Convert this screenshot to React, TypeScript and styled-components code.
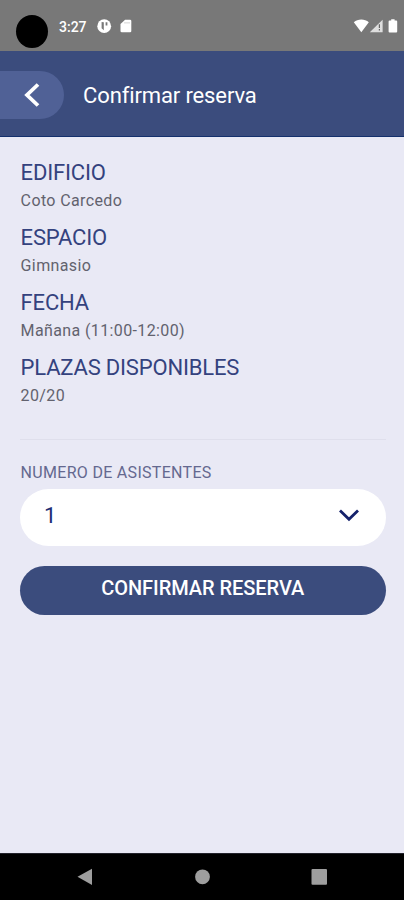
import React from "react";
import styled, { createGlobalStyle } from "styled-components";

const GlobalStyle = createGlobalStyle`
  * { box-sizing: border-box; }
  body { margin: 0; background: #e9e9f5; font-family: Roboto, sans-serif; }
  button { font-family: inherit; border: 0; padding: 0; }
`;

const Screen = styled.div`
  display: flex;
  flex-direction: column;
  width: 404px;
  height: 900px;
  overflow: hidden;
  background: #e9e9f5;
`;

const StatusBar = styled.div`
  display: flex;
  flex: 0 0 51px;
  align-items: flex-start;
  background: #787878;
  color: #fff;
`;

const Camera = styled.div`
  width: 32px;
  height: 33px;
  margin: 15px 0 0 16px;
  border-radius: 50%;
  background: #000;
`;

const Clock = styled.span`
  width: 38px;
  margin: 17px 0 0 11px;
  font-size: 14px;
  font-weight: 500;
  line-height: 20px;
`;

const StatusIcons = styled.svg<{ $end?: boolean }>`
  display: block;
  margin-top: 18px;
  margin-left: ${(p) => (p.$end ? "auto" : "0")};
`;

const Header = styled.header`
  display: flex;
  flex: 0 0 86px;
  align-items: center;
  background: #3b4c7d;
  border-bottom: 1px solid #14306d;
`;

const BackButton = styled.button`
  display: flex;
  align-items: center;
  width: 64px;
  height: 48px;
  margin-top: 2px;
  padding-left: 24px;
  border-radius: 0 24px 24px 0;
  background: #506196;
`;

const Title = styled.h1`
  margin: 5px 0 0 19px;
  color: #fff;
  font-size: 22px;
  font-weight: 400;
  line-height: 28px;
  letter-spacing: -0.12px;
`;

const Content = styled.main`
  display: flex;
  flex: 1;
  flex-direction: column;
  padding: 21px 18.5px 0 20px;
`;

const Details = styled.dl`
  margin: 0;
  padding-bottom: 20.6px;
  border-bottom: 1px solid #dfdfec;
`;

const Detail = styled.div`
  height: 65.1px;
  padding-left: 0.6px;
`;

const Term = styled.dt`
  color: #34427e;
  font-size: 22px;
  line-height: 30px;
  letter-spacing: -0.18px;
`;

const Value = styled.dd`
  margin: 3px 0 0;
  color: #62626e;
  font-size: 16px;
  line-height: 19px;
  letter-spacing: 0.38px;
`;

const FieldLabel = styled.label`
  margin: 23px 0 6px 0.6px;
  color: #64688f;
  font-size: 16px;
  line-height: 20px;
  letter-spacing: 0.3px;
`;

const Select = styled.button`
  display: flex;
  flex: 0 0 57px;
  align-items: center;
  justify-content: space-between;
  padding: 0 26px 4px 24px;
  border-radius: 29px;
  background: #fff;
  color: #1d2d74;
  font-size: 22px;
`;

const Confirm = styled.button`
  flex: 0 0 49px;
  margin-top: 20px;
  padding-bottom: 4px;
  border-radius: 25px;
  background: #3b4c7d;
  color: #fff;
  font-size: 20px;
  font-weight: 500;
  letter-spacing: -0.05px;
`;

const NavBar = styled.nav`
  flex: 0 0 47px;
  border-top: 1px solid #22222b;
  background: #000;
`;

const details = [
  { term: "EDIFICIO", value: "Coto Carcedo" },
  { term: "ESPACIO", value: "Gimnasio" },
  { term: "FECHA", value: "Mañana (11:00-12:00)" },
  { term: "PLAZAS DISPONIBLES", value: "20/20" },
];

export default function App() {
  return (
    <Screen>
      <GlobalStyle />
      <StatusBar>
        <Camera />
        <Clock>3:27</Clock>
        <StatusIcons width="36" height="17" viewBox="0 0 36 17" fill="#fff">
          <circle cx="7.2" cy="8.2" r="6.9" />
          <path d="M4.6 4v6.2l2.2 2V4.2ZM8.6 4.2h1.8v3.3H8.6Z" fill="#787878" />
          <path d="M28.1 1.8h4.9a1.3 1.3 0 0 1 1.3 1.3v9.8a1.3 1.3 0 0 1-1.3 1.3h-8.2a1.3 1.3 0 0 1-1.3-1.3V6Z" />
          <path d="M28 4v1.6M30 4v1.6M32 4v1.6" stroke="#bbb" strokeWidth="0.8" />
        </StatusIcons>
        <StatusIcons $end width="51" height="17" viewBox="0 0 51 17" fill="#fff">
          <path d="M0.8 4.3C4.8.7 11.8.7 15.8 4.3L8.3 14.2Z" />
          <path d="M29.6 1.8V14.2H16.8Z" fill="#dedede" />
          <path d="M26.4 6.2v3.7M26.4 11v1.5" stroke="#666" strokeWidth="1.2" />
          <path d="M38.2 1.3h3.4v1.2h1.6a1 1 0 0 1 1 1v10a1 1 0 0 1-1 1h-6.6a1 1 0 0 1-1-1v-10a1 1 0 0 1 1-1h1.6Z" />
        </StatusIcons>
      </StatusBar>
      <Header>
        <BackButton aria-label="Volver">
          <svg width="17" height="24" viewBox="0 0 17 24" fill="none">
            <path d="M14 1.5 3 12 14 22.5" stroke="#fff" strokeWidth="3.8" />
          </svg>
        </BackButton>
        <Title>Confirmar reserva</Title>
      </Header>
      <Content>
        <Details>
          {details.map((d) => (
            <Detail key={d.term}>
              <Term>{d.term}</Term>
              <Value>{d.value}</Value>
            </Detail>
          ))}
        </Details>
        <FieldLabel htmlFor="asistentes">NUMERO DE ASISTENTES</FieldLabel>
        <Select id="asistentes">
          <span>1</span>
          <svg width="22" height="14" viewBox="0 0 22 14" fill="none">
            <path d="M2 2.5 11 11.3 20 2.5" stroke="#14216b" strokeWidth="2.8" />
          </svg>
        </Select>
        <Confirm>CONFIRMAR RESERVA</Confirm>
      </Content>
      <NavBar>
        <svg width="404" height="46" viewBox="0 0 404 46" fill="#9e9e9e" display="block">
          <path d="M77.5 22.8 92 14.7v16.2Z" />
          <circle cx="202.5" cy="22.8" r="7.4" />
          <rect x="311.5" y="15" width="15.5" height="15.7" rx="1" />
        </svg>
      </NavBar>
    </Screen>
  );
}
